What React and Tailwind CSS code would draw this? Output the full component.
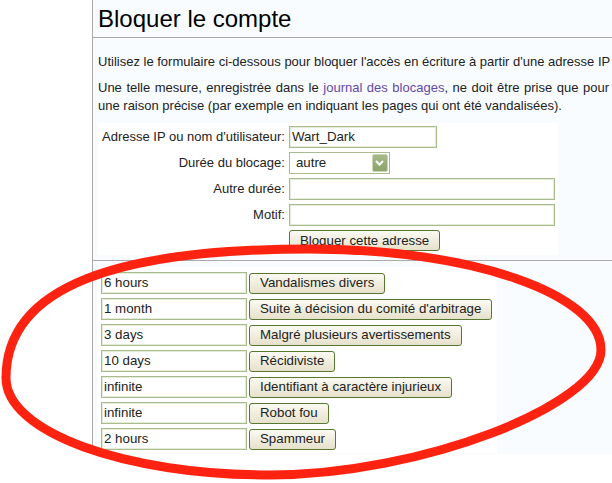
import React from 'react'

const presets = [
  { duration: '6 hours', reason: 'Vandalismes divers' },
  { duration: '1 month', reason: "Suite à décision du comité d'arbitrage" },
  { duration: '3 days', reason: 'Malgré plusieurs avertissements' },
  { duration: '10 days', reason: 'Récidiviste' },
  { duration: 'infinite', reason: 'Identifiant à caractère injurieux' },
  { duration: 'infinite', reason: 'Robot fou' },
  { duration: '2 hours', reason: 'Spammeur' },
]

const Field = ({ value = '', className = '' }) => (
  <div className={`h-[22px] bg-white border border-[#a9bc8e] shadow-[inset_0_0_0_1px_#e4ecd8] flex items-center px-[2px] text-[13.3px] text-[#222] ${className}`}>
    {value}
  </div>
)

const Button = ({ children }) => (
  <div className="h-[21px] px-[10px] flex items-center rounded-[3px] border border-[#58782f] bg-gradient-to-b from-[#fbfaf3] to-[#e6e1cb] text-[13.3px] text-[#222] whitespace-nowrap">
    {children}
  </div>
)

const App = () => {
  return (
    <div className="relative w-[612px] h-[483px] overflow-hidden bg-white font-['Liberation_Sans',Arial,sans-serif] text-[#222]">
      <div className="flex">
        <div className="w-[92px] shrink-0" />
        <div className="flex-1 min-w-0 border-l border-[#aaa] bg-[#f8fcff] pb-[1px]">
          {/* Header */}
          <h1 className="px-[5px] pt-[4px] pb-[4px] text-[24px] leading-[29px] text-black border-b border-[#aaa]">
            Bloquer le compte
          </h1>

          <div className="px-[5px] text-[13px] leading-[18px]">
            <p className="mt-[15px] whitespace-nowrap">
              Utilisez le formulaire ci-dessous pour bloquer l'accès en écriture à partir d'une adresse IP
            </p>
            <p className="mt-[8px] w-[511px]">
              <span className="block text-justify [text-align-last:justify]">
                Une telle mesure, enregistrée dans le <span className="text-[#6449a6]">journal des blocages</span>, ne doit être prise que pour
              </span>
              <span className="block">une raison précise (par exemple en indiquant les pages qui ont été vandalisées).</span>
            </p>

            {/* Block form */}
            <div className="mt-[8px] inline-grid grid-cols-[auto_auto] gap-x-[4px] gap-y-[4px] items-center bg-white pt-[3px] pb-[4px] pl-[4px] pr-[3px]">
              <div className="text-right">Adresse IP ou nom d'utilisateur:</div>
              <Field value="Wart_Dark" className="w-[148px]" />

              <div className="text-right">Durée du blocage:</div>
              <div className="w-[101px] h-[22px] bg-white border border-[#a9bc8e] flex items-center justify-between pl-[6px] pr-[1px] text-[13.3px]">
                <span>autre</span>
                <div className="w-[16px] h-[18px] rounded-[2px] bg-gradient-to-b from-[#a6bb88] to-[#8ca36c] border border-[#c9d6b6] flex items-center justify-center">
                  <svg width="9" height="6" viewBox="0 0 9 6">
                    <path d="M1 1 L4.5 4.5 L8 1" fill="none" stroke="#fff" strokeWidth="2" />
                  </svg>
                </div>
              </div>

              <div className="text-right">Autre durée:</div>
              <Field className="w-[266px]" />

              <div className="text-right">Motif:</div>
              <Field className="w-[266px]" />

              <div />
              <div className="flex">
                <Button>Bloquer cette adresse</Button>
              </div>
            </div>
          </div>

          <div className="mt-[5px] border-t border-[#aaa]" />

          <div className="px-[5px]">
            <div className="mt-[6px] inline-flex flex-col gap-[4px] bg-white pt-[5px] pb-[3px] pl-[3px] pr-[5px]">
              {presets.map((preset, i) => (
                <div key={i} className="flex items-center gap-[2px]">
                  <Field value={preset.duration} className="w-[146px]" />
                  <Button>{preset.reason}</Button>
                </div>
              ))}
            </div>
          </div>
        </div>
      </div>

      {/* Red hand-drawn circle */}
      <svg className="absolute inset-0 pointer-events-none" width="612" height="483" viewBox="0 0 612 483">
        <path
          d="M6 378 C6 285 120 249 310 249 C471 249 601 294 601 350 C601 405 420 475 270 475 C124 475 6 432 6 378 Z"
          fill="none"
          stroke="#fe2311"
          strokeWidth="9"
        />
      </svg>
    </div>
  )
}

export default App
